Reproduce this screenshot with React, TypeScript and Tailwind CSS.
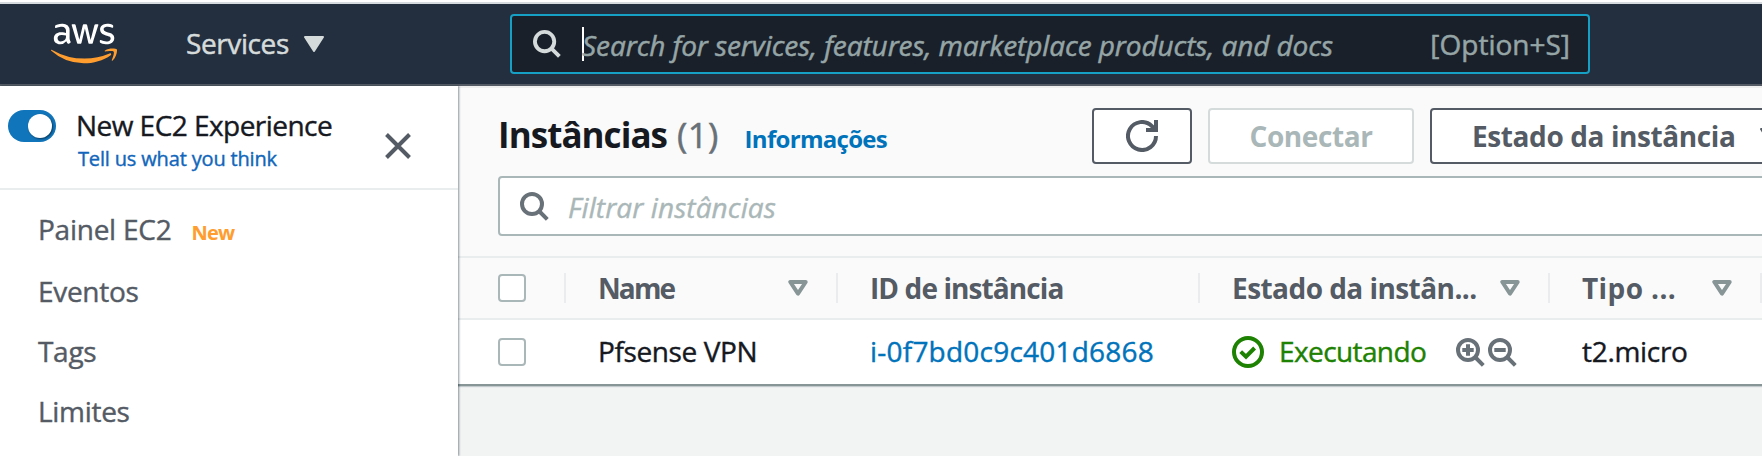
import React from "react";
import { FaAws } from "react-icons/fa";

function SearchIcon({ className, children }: { className: string; children?: React.ReactNode }) {
  return (
    <svg viewBox="0 0 29 29" fill="none" stroke="currentColor" strokeWidth="4" className={className}>
      <circle cx="12" cy="12" r="10" />
      <path d="M19 19l8.3 8.3" />
      {children}
    </svg>
  );
}

function SortIcon() {
  return (
    <svg viewBox="0 0 20 16" className="h-4 w-5 shrink-0 text-[#879596]" fill="none" stroke="currentColor" strokeWidth="4" strokeLinejoin="round">
      <path d="M2.3 2h15.4L10 13.6z" />
    </svg>
  );
}

function Checkbox() {
  return <span className="block size-7 shrink-0 rounded-[4px] border-2 border-[#aab7b8] bg-white" />;
}

function TopNav() {
  return (
    <header className="flex h-[86px] shrink-0 flex-col border-b-2 border-[#545b64] bg-[#232f3e] text-[#d5dbdb]">
      <div className="h-1 shrink-0 border-b-2 border-[#d5dbdf] bg-white" />
      <div className="flex h-20 items-center">
        <svg className="size-0">
          <linearGradient id="awsFill" x1="0" y1="0" x2="0" y2="1">
            <stop offset="0.58" stopColor="#ffffff" />
            <stop offset="0.58" stopColor="#ff9d2e" />
          </linearGradient>
        </svg>
        <FaAws className="mb-0.5 ml-[51px] h-[53px] w-[66px] [&_path]:fill-[url(#awsFill)]" />
        <div className="ml-[69px] flex w-[324px] items-center">
          <span className="-mt-0.5 text-[28px] leading-10 tracking-[-0.4px] [-webkit-text-stroke:0.5px]">Services</span>
          <svg viewBox="0 0 20 16" className="ml-[15px] h-4 w-5" fill="currentColor" stroke="currentColor" strokeWidth="2" strokeLinejoin="round">
            <path d="M1 1h18l-9 14z" />
          </svg>
        </div>
        <div className="flex h-[60px] w-[1080px] items-center rounded-[4px] border-2 border-[#16a0c5] bg-[#1a202a] pl-[21px] pr-[18px] text-[28px] text-[#95a5a6] [-webkit-text-stroke:0.5px]">
          <SearchIcon className="size-7 text-[#d5dbdb]" />
          <span className="ml-[21px] h-[34px] w-0.5 bg-white" />
          <span className="-ml-0.5 grow pt-0.5 italic leading-10 tracking-[-0.08px]">
            Search for services, features, marketplace products, and docs
          </span>
          <span className="leading-10">[Option+S]</span>
        </div>
      </div>
    </header>
  );
}

function Sidebar() {
  const links = ["Eventos", "Tags", "Limites"];
  return (
    <aside className="z-10 w-[458px] shrink-0 bg-white text-[28px] text-[#545b64] shadow-[1px_0_2px_rgba(0,28,36,0.45)] [-webkit-text-stroke:0.4px]">
      <div className="flex h-[104px] border-b-2 border-[#eaeded]">
        <span className="ml-2 mt-6 flex h-8 w-12 justify-end rounded-full bg-[#1175bb] p-1">
          <span className="size-6 rounded-full bg-white shadow-[1px_1px_2px_rgba(0,0,0,0.5)]" />
        </span>
        <div className="ml-5 mt-[19px] w-[309px]">
          <div className="leading-10 tracking-[-0.54px] text-[#16191f]">New EC2 Experience</div>
          <div className="ml-0.5 text-[20px] leading-7 tracking-[-0.16px] text-[#1166bb]">Tell us what you think</div>
        </div>
        <svg viewBox="0 0 26 26" className="mt-[47px] size-[26px]" stroke="currentColor" strokeWidth="4">
          <path d="M1.5 1.5l23 23M24.5 1.5l-23 23" />
        </svg>
      </div>
      <nav className="flex flex-col gap-5 pl-[38px] pt-[19px] leading-10">
        <div className="mb-0.5 flex h-10 items-baseline">
          <span className="tracking-[-0.25px]">Painel EC2</span>
          <span className="ml-[20px] text-[20px] font-bold tracking-[-0.8px] text-[#ff9d2e] [-webkit-text-stroke:0]">New</span>
        </div>
        {links.map((l) => (
          <div key={l} className="h-10 tracking-[-0.3px]">{l}</div>
        ))}
      </nav>
    </aside>
  );
}

function Toolbar() {
  return (
    <div className="flex h-[90px] pl-10 pt-[22px]">
      <div className="flex w-[594px] shrink-0 items-baseline pt-[3px] leading-[48px]">
        <h1 className="text-[35px] font-bold tracking-[-0.95px] text-[#16191f]">Instâncias</h1>
        <span className="ml-[10px] text-[35px] tracking-[0.3px] text-[#687078] [-webkit-text-stroke:0.5px]">(1)</span>
        <a className="ml-[26px] text-[24px] font-bold tracking-[-0.7px] text-[#0073bb]">Informações</a>
      </div>
      <div className="flex shrink-0 gap-4 text-[28px] font-bold text-[#545b64]">
        <button className="flex h-14 w-[100px] items-center justify-center rounded-[4px] border-2 border-[#545b64] bg-white">
          <svg viewBox="0 0 32 32" className="size-8" fill="none" stroke="currentColor" strokeWidth="4">
            <path d="M30 16A14 14 0 1 1 25.9 6.1L29 9.5" />
            <path d="M20 10h10V0" />
          </svg>
        </button>
        <button className="h-14 w-[206px] rounded-[4px] border-2 border-[#d5dbdb] bg-white tracking-[-0.4px] text-[#aab7b8]">Conectar</button>
        <button className="flex h-14 w-[400px] items-center rounded-[4px] border-2 border-[#545b64] bg-white pl-10 tracking-[-0.4px]">
          Estado da instância
          <svg viewBox="0 0 20 16" className="ml-[24px] h-4 w-5" fill="currentColor" stroke="currentColor" strokeWidth="2" strokeLinejoin="round">
            <path d="M1 1h18l-9 14z" />
          </svg>
        </button>
      </div>
    </div>
  );
}

const columns = [
  { label: "Name", width: "w-[272px]", text: "w-[190px] tracking-[-1.9px]", sort: true },
  { label: "ID de instância", width: "w-[362px]", text: "w-[240px] tracking-[-0.9px]", sort: false },
  { label: "Estado da instân...", width: "w-[350px]", text: "w-[268px] tracking-[-0.55px]", sort: true },
  { label: "Tipo ...", width: "w-[212px]", text: "w-[130px] tracking-[0.4px]", sort: true },
  { label: "", width: "w-[100px]", text: "", sort: false },
];

function InstanceTable() {
  return (
    <div className="text-[28px]">
      <div className="flex h-16 items-center border-y-2 border-[#eaeded] pl-10 font-bold text-[#545b64]">
        <div className="w-[66px] shrink-0">
          <Checkbox />
        </div>
        {columns.map((c) => (
          <div key={c.label} className={`flex h-[30px] shrink-0 items-center border-l-2 border-[#eaeded] pl-8 ${c.width}`}>
            <span className={`shrink-0 leading-10 ${c.text}`}>{c.label}</span>
            {c.sort && <SortIcon />}
          </div>
        ))}
      </div>
      <div className="flex h-16 items-center bg-white pl-10 text-[#16191f] shadow-[0_2px_0_#879596,0_3px_1px_#c3cacc] [-webkit-text-stroke:0.4px]">
        <div className="w-[100px] shrink-0">
          <Checkbox />
        </div>
        <span className="-mt-0.5 w-[272px] shrink-0 tracking-[-0.4px]">Pfsense VPN</span>
        <a className="-mt-0.5 w-[362px] shrink-0 tracking-[0.22px] text-[#0073bb]">i-0f7bd0c9c401d6868</a>
        <div className="flex w-[350px] shrink-0 items-center text-[#1d8102]">
          <svg viewBox="0 0 32 32" className="-ml-px size-8 shrink-0 translate-x-px" fill="none" stroke="currentColor" strokeWidth="4">
            <circle cx="16" cy="16" r="14" />
            <path d="M8.7 15.6l5.3 5 8.6-8.6" />
          </svg>
          <span className="-mt-0.5 ml-4 w-[177px] tracking-[-0.6px]">Executando</span>
          <div className="flex gap-[3px] text-[#687078]">
            <SearchIcon className="size-[29px]">
              <path d="M6.3 12h11.4M12 6.3v11.4" />
            </SearchIcon>
            <SearchIcon className="size-[29px]">
              <path d="M6.3 12h11.4" />
            </SearchIcon>
          </div>
        </div>
        <span className="-mt-0.5 shrink-0 tracking-[-0.3px]">t2.micro</span>
      </div>
    </div>
  );
}

export default function App() {
  return (
    <div className="flex h-[456px] w-[1762px] flex-col overflow-hidden bg-[#f2f3f3] font-['Open_Sans','Noto_Sans',sans-serif]">
      <TopNav />
      <div className="flex min-h-0 grow">
        <Sidebar />
        <main className="min-w-0 grow overflow-hidden">
          <div className="bg-[#fafafa] shadow-[inset_0_2px_0_#eeeeee]">
            <Toolbar />
            <div className="ml-10 flex h-[60px] w-[1400px] items-center rounded-[4px] border-2 border-[#aab7b8] bg-white pl-5">
              <SearchIcon className="size-[29px] text-[#687078]" />
              <span className="ml-[19px] pt-0.5 text-[28px] italic leading-10 tracking-[0.1px] text-[#aab7b8] [-webkit-text-stroke:0.4px]">Filtrar instâncias</span>
            </div>
            <div className="h-5" />
            <InstanceTable />
          </div>
        </main>
      </div>
    </div>
  );
}
